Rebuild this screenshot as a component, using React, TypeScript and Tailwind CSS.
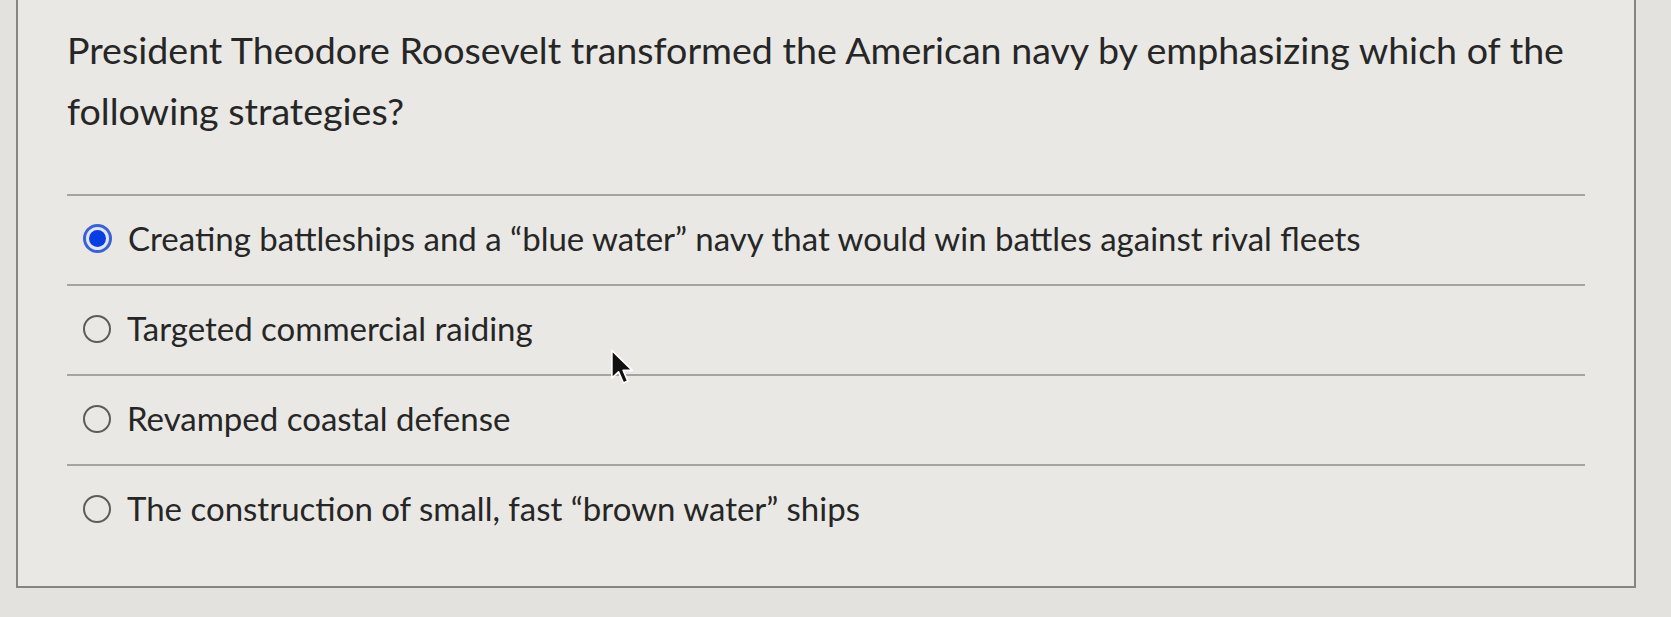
import React from "react";

const options = [
  "Creating battleships and a “blue water” navy that would win battles against rival fleets",
  "Targeted commercial raiding",
  "Revamped coastal defense",
  "The construction of small, fast “brown water” ships",
];

function Radio({ checked }: { checked: boolean }) {
  if (checked) {
    return (
      <span className="flex h-[29px] w-[29px] shrink-0 items-center justify-center rounded-full border-[3px] border-[#3a62d6] bg-[#e2e6f2]">
        <span className="h-[17px] w-[17px] rounded-full bg-[#0b3ee2]" />
      </span>
    );
  }
  return <span className="h-[28px] w-[28px] shrink-0 rounded-full border-[2.5px] border-[#5c5c5a]" />;
}

export default function App() {
  return (
    <div className="relative h-[617px] w-[1671px] overflow-hidden bg-[#e3e2de] font-['Lato','Open_Sans',sans-serif] text-[#262626]">
      <div className="ml-[16px] h-[588px] w-[1620px] border-b-2 border-l-2 border-r-2 border-[#858583] bg-[#e9e8e4]">
        <div className="pl-[49px] pr-[48px] pt-[19px]">
          <p className="w-[1560px] text-[37.6px] leading-[61px]">
            President Theodore Roosevelt transformed the American navy by emphasizing which of the following strategies?
          </p>
          <div className="mt-[53px] w-[1518px]">
            {options.map((text, i) => (
              <div key={i} className="border-t-2 border-[#a4a4a1]">
                <div className="flex h-[88px] items-center gap-[16px] pb-[3px] pl-[16px]">
                  <Radio checked={i === 0} />
                  <span className="text-[33px] leading-none">{text}</span>
                </div>
              </div>
            ))}
          </div>
        </div>
      </div>
      <svg className="absolute left-[610px] top-[348px]" width="26" height="38" viewBox="0 0 14 20">
        <path d="M1 1 L1 16 L4.6 12.6 L7.2 18.6 L9.6 17.6 L7.1 11.8 L12 11.8 Z" fill="#111" stroke="#fff" strokeWidth="0.9" strokeLinejoin="round" />
      </svg>
    </div>
  );
}
